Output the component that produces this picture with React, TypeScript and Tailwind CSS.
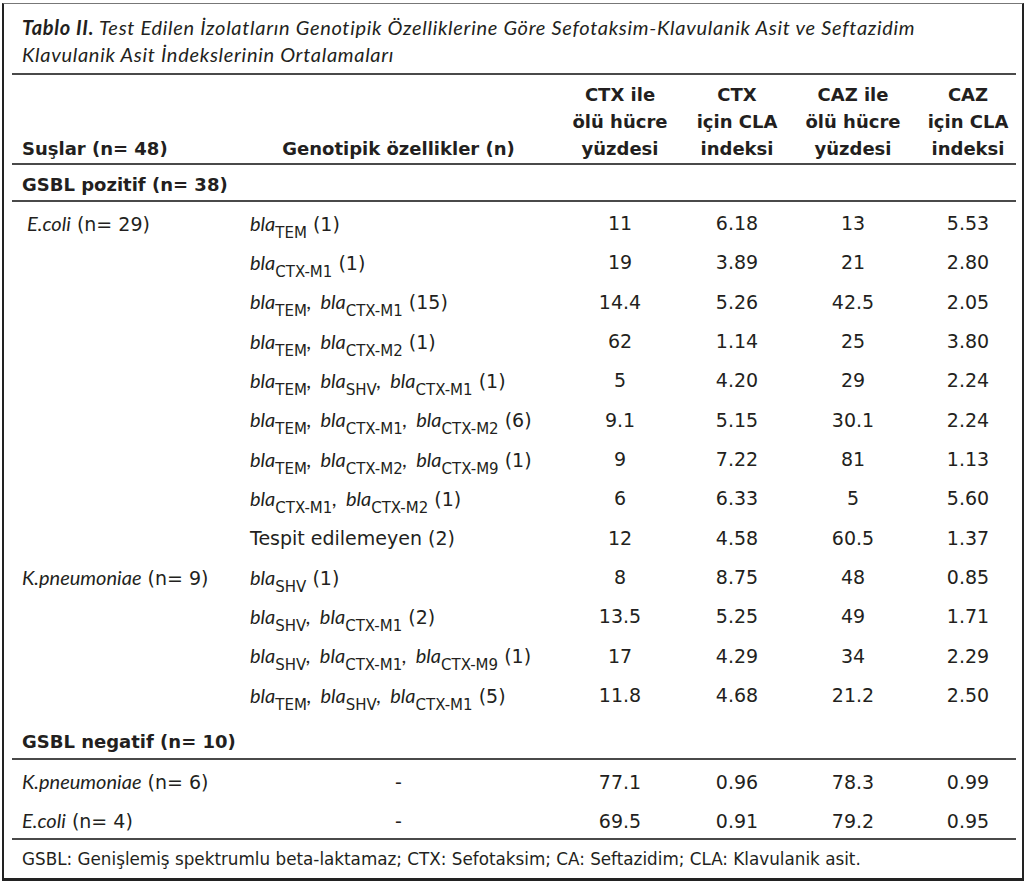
import React from "react";

type Gen = { subs: string[]; n: string } | { text: string };

type Row = {
  strain?: { name: string; n: string; indent?: boolean };
  gen: Gen;
  vals: [string, string, string, string];
};

const positive: Row[] = [
  { strain: { name: "E.coli", n: "(n= 29)", indent: true }, gen: { subs: ["TEM"], n: "(1)" }, vals: ["11", "6.18", "13", "5.53"] },
  { gen: { subs: ["CTX-M1"], n: "(1)" }, vals: ["19", "3.89", "21", "2.80"] },
  { gen: { subs: ["TEM", "CTX-M1"], n: "(15)" }, vals: ["14.4", "5.26", "42.5", "2.05"] },
  { gen: { subs: ["TEM", "CTX-M2"], n: "(1)" }, vals: ["62", "1.14", "25", "3.80"] },
  { gen: { subs: ["TEM", "SHV", "CTX-M1"], n: "(1)" }, vals: ["5", "4.20", "29", "2.24"] },
  { gen: { subs: ["TEM", "CTX-M1", "CTX-M2"], n: "(6)" }, vals: ["9.1", "5.15", "30.1", "2.24"] },
  { gen: { subs: ["TEM", "CTX-M2", "CTX-M9"], n: "(1)" }, vals: ["9", "7.22", "81", "1.13"] },
  { gen: { subs: ["CTX-M1", "CTX-M2"], n: "(1)" }, vals: ["6", "6.33", "5", "5.60"] },
  { gen: { text: "Tespit edilemeyen (2)" }, vals: ["12", "4.58", "60.5", "1.37"] },
  { strain: { name: "K.pneumoniae", n: "(n= 9)" }, gen: { subs: ["SHV"], n: "(1)" }, vals: ["8", "8.75", "48", "0.85"] },
  { gen: { subs: ["SHV", "CTX-M1"], n: "(2)" }, vals: ["13.5", "5.25", "49", "1.71"] },
  { gen: { subs: ["SHV", "CTX-M1", "CTX-M9"], n: "(1)" }, vals: ["17", "4.29", "34", "2.29"] },
  { gen: { subs: ["TEM", "SHV", "CTX-M1"], n: "(5)" }, vals: ["11.8", "4.68", "21.2", "2.50"] },
];

const negative: Row[] = [
  { strain: { name: "K.pneumoniae", n: "(n= 6)" }, gen: { text: "-" }, vals: ["77.1", "0.96", "78.3", "0.99"] },
  { strain: { name: "E.coli", n: "(n= 4)" }, gen: { text: "-" }, vals: ["69.5", "0.91", "79.2", "0.95"] },
];

const cols = "grid grid-cols-[233px_307px_136px_98px_134px_96px]";
const italic = "font-['Lato',sans-serif] italic text-[20px]";

function Genotype({ gen }: { gen: Gen }) {
  if ("text" in gen) return <>{gen.text}</>;
  return (
    <>
      {gen.subs.map((s, i) => (
        <React.Fragment key={i}>
          <span className={italic}>bla</span>
          <span className="relative top-[7px] text-[15px] leading-none">{s}</span>
          {i < gen.subs.length - 1 && <span className={`${italic} mr-[9px]`}>,</span>}
        </React.Fragment>
      ))}{" "}
      {gen.n}
    </>
  );
}

function DataRow({ row, h }: { row: Row; h: string }) {
  const dash = "text" in row.gen && row.gen.text === "-";
  return (
    <div className={`${cols} ${h} items-center`}>
      <div className={`whitespace-nowrap ${row.strain?.indent ? "pl-[15px]" : "pl-[10px]"}`}>
        {row.strain && (
          <>
            <span className={italic}>{row.strain.name}</span> {row.strain.n}
          </>
        )}
      </div>
      <div className={`whitespace-nowrap ${dash ? "text-center" : "pl-[5px]"}`}>
        <Genotype gen={row.gen} />
      </div>
      {row.vals.map((v, i) => (
        <div key={i} className="text-center">
          {v}
        </div>
      ))}
    </div>
  );
}

export default function App() {
  return (
    <div className="min-h-screen bg-white pl-[2px] pt-[3px] text-[#231f20] font-['DejaVu_Sans',sans-serif] text-[19px] leading-[27px]">
      <div className="w-[1022px] border-l-2 border-r-2 border-b-[3px] border-t border-l-[#222] border-r-[#222] border-b-[#222] border-t-[#777] pl-[8px] pr-[6px]">
        <div className="border-b-2 border-[#4a4a4a] pl-[10px] pt-[10px] pb-[5px] font-['Lato',sans-serif] text-[20px] italic tracking-[0.7px]">
          <span className="font-bold">Tablo II.</span> Test Edilen İzolatların Genotipik Özelliklerine Göre Sefotaksim-Klavulanik Asit ve Seftazidim
          <br />
          Klavulanik Asit İndekslerinin Ortalamaları
        </div>

        <div className={`${cols} h-[90px] items-end border-b-2 border-[#4a4a4a] pb-[1px] text-[18px] font-bold`}>
          <div className="pl-[10px]">Suşlar (n= 48)</div>
          <div className="text-center">Genotipik özellikler (n)</div>
          <div className="text-center">CTX ile<br />ölü hücre<br />yüzdesi</div>
          <div className="text-center">CTX<br />için CLA<br />indeksi</div>
          <div className="text-center">CAZ ile<br />ölü hücre<br />yüzdesi</div>
          <div className="text-center">CAZ<br />için CLA<br />indeksi</div>
        </div>

        <div className="flex h-[37px] items-end border-b-2 border-[#4a4a4a] pb-[2px] pl-[10px] text-[18px] font-bold">
          GSBL pozitif (n= 38)
        </div>

        <div className="pt-[2px]">
          {positive.map((r, i) => (
            <DataRow key={i} row={r} h="h-[39.33px]" />
          ))}
        </div>

        <div className="flex h-[45px] items-end border-b-2 border-[#4a4a4a] pb-[3px] pl-[10px] text-[18px] font-bold">
          GSBL negatif (n= 10)
        </div>

        <DataRow row={negative[0]} h="h-[40px] pt-[4px]" />
        <div className="border-b-2 border-[#4a4a4a]">
          <DataRow row={negative[1]} h="h-[38px] pt-[4px]" />
        </div>

        <div className="flex h-[38px] items-center pl-[10px] text-[16.8px]">
          GSBL: Genişlemiş spektrumlu beta-laktamaz; CTX: Sefotaksim; CA: Seftazidim; CLA: Klavulanik asit.
        </div>
      </div>
    </div>
  );
}
